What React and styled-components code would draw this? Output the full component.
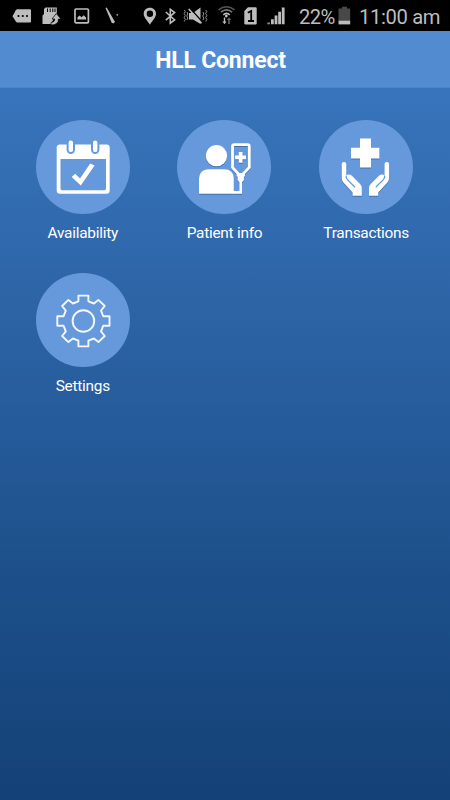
import React from "react";
import styled, { createGlobalStyle } from "styled-components";

const GlobalStyle = createGlobalStyle`
  * {
    box-sizing: border-box;
  }
  body {
    margin: 0;
    background: #144177;
    font-family: Roboto, "Liberation Sans", sans-serif;
  }
`;

const Screen = styled.div`
  width: 450px;
  height: 800px;
  display: flex;
  flex-direction: column;
  overflow: hidden;
  background: linear-gradient(to bottom, #3a78c2 0%, #3874bb 11%, #275d9d 50%, #1c4f89 73%, #144177 100%);
`;

const StatusBar = styled.div`
  display: flex;
  align-items: center;
  flex-shrink: 0;
  height: 31px;
  padding-left: 12px;
  background: #000;
  color: #bdbdbd;
`;

const StatusIcon = styled.svg`
  flex-shrink: 0;
  width: ${(props) => props.$w}px;
  height: 31px;
  margin-right: ${(props) => props.$gap}px;
  fill: #bdbdbd;
`;

const StatusText = styled.span`
  width: ${(props) => props.$w}px;
  margin-right: ${(props) => props.$gap || 0}px;
  padding-top: 3px;
  font-size: 20.2px;
  line-height: 28px;
  letter-spacing: ${(props) => props.$spacing || 0}px;
  white-space: nowrap;
`;

const Header = styled.header`
  display: flex;
  align-items: center;
  justify-content: center;
  flex-shrink: 0;
  height: 57px;
  padding: 4px 9px 0 0;
  background: #528bd0;
  border-bottom: 1px solid #4a84c9;
`;

const Title = styled.h1`
  margin: 0;
  color: #fff;
  font-size: 23px;
  font-weight: 700;
  line-height: 30px;
  letter-spacing: -0.2px;
`;

const Menu = styled.main`
  display: grid;
  grid-template-columns: repeat(3, 1fr);
  grid-auto-rows: 153px;
  padding: 32px 13px 0 12px;
`;

const MenuItem = styled.div`
  display: flex;
  flex-direction: column;
  align-items: center;
`;

const Circle = styled.div`
  width: 94px;
  height: 94px;
  border-radius: 50%;
  background: #6699dc;
  svg {
    display: block;
    filter: ${(props) =>
      props.$shadow ? "drop-shadow(0 1px 0.7px rgba(30, 60, 110, 0.45))" : "none"};
  }
`;

const Label = styled.span`
  margin-top: 9px;
  color: #fff;
  font-size: 15.4px;
  line-height: 20px;
  letter-spacing: -0.25px;
  white-space: nowrap;
`;

function CalendarIcon() {
  return (
    <svg width="94" height="94" viewBox="0 0 94 94" fill="#fff">
      <path
        fillRule="evenodd"
        d="M24 24.5H70.5Q73.7 24.5 73.7 27.7V70.5Q73.7 73.7 70.5 73.7H24Q20.7 73.7 20.7 70.5V27.7Q20.7 24.5 24 24.5ZM24.5 39V68.5Q24.5 70.2 26.2 70.2H68.3Q70 70.2 70 68.5V39Z"
      />
      <g strokeLinecap="round">
        <path d="M34.8 23V29.8M59.2 23V29.8" stroke="#6699dc" strokeWidth="8.4" />
        <path d="M34.8 22.6V29.9M59.2 22.6V29.9" stroke="#fff" strokeWidth="4.4" />
      </g>
      <path d="M35.7 57L39.2 53.7L44 58.4L54.2 43.6L58.6 45.6L44.8 65.4Z" />
    </svg>
  );
}

function PatientIcon() {
  return (
    <svg width="94" height="94" viewBox="0 0 94 94" fill="#fff">
      <circle cx="39.5" cy="35.7" r="10.6" />
      <path d="M22 73.7V60Q22 49.2 32 49.2H47Q56.8 49.2 56.8 59V73.7Z" />
      <g fill="none" stroke="#fff">
        <path
          d="M57.3 24.7H70.5Q72.3 24.7 72.3 26.5V47.5L66.5 53.5V55H61V53.5L55.5 47.5V26.5Q55.5 24.7 57.3 24.7Z"
          strokeWidth="2.8"
        />
        <path d="M63.7 60V72.4H56" strokeWidth="2.6" />
      </g>
      <path d="M60.6 53H66.9V60L65.3 62H62.2L60.6 60Z" />
      <path d="M61.7 32H65.5V35.5H69V39.2H65.5V42.8H61.7V39.2H58.1V35.5H61.7Z" />
    </svg>
  );
}

function HandsIcon() {
  return (
    <svg width="94" height="94" viewBox="0 0 94 94" fill="#fff">
      <path d="M41 18.6H52V27.7H60.4V38.4H52V47.6H41V38.4H32V27.7H41Z" />
      <g id="hand">
        <path d="M22.7 44.2Q22.7 42 25 42Q27.3 42 27.3 44.2V55.2Q30 53.4 32.6 55.6L41.3 64.2Q42.8 65.8 42.8 68V75.8H33.6V72.4L24.4 62.4Q22.9 60.7 22.8 58.5Z" />
        <path
          d="M27.2 56.2Q26.9 58 28.4 59.6L35.6 66.8"
          fill="none"
          stroke="#6699dc"
          strokeWidth="1.3"
          strokeLinecap="round"
        />
      </g>
      <use href="#hand" transform="translate(92.8 0) scale(-1 1)" />
    </svg>
  );
}

function GearIcon() {
  return (
    <svg
      width="94"
      height="94"
      viewBox="0 0 94 94"
      fill="none"
      stroke="#f4f8fd"
      strokeWidth="1.9"
      strokeLinejoin="round"
    >
      <g transform="translate(47.4 48)">
        <circle r="10.8" />
        <path d="M-5 -25.4H5V-19.7L10.5 -17.5L15 -21.1L21.3 -15L17.6 -10.3L19.8 -4.8H26.1V4.8H19.8L17.6 10.3L21.3 15L15 21.1L10.5 17.5L5 19.7V25.4H-5V19.7L-10.5 17.5L-15 21.1L-21.3 15L-17.6 10.3L-19.8 4.8H-26.1V-4.8H-19.8L-17.6 -10.3L-21.3 -15L-15 -21.1L-10.5 -17.5L-5 -19.7Z" />
      </g>
    </svg>
  );
}

const items = [
  { name: "Availability", icon: CalendarIcon },
  { name: "Patient info", icon: PatientIcon, shadow: true },
  { name: "Transactions", icon: HandsIcon, shadow: true },
  { name: "Settings", icon: GearIcon },
];

function PhoneStatus() {
  return (
    <StatusBar>
      {/* messages */}
      <StatusIcon $w={19} $gap={11} viewBox="0 0 19 31">
        <path d="M5.5 9.3H18Q19 9.3 19 10.3V21.5Q19 22.5 18 22.5H5.5Q4.5 22.5 3.8 21.5L0.5 16.2L3.8 10.3Q4.5 9.3 5.5 9.3Z" />
        <g fill="#000">
          <circle cx="6.5" cy="16" r="1.1" />
          <circle cx="10.8" cy="16" r="1.1" />
          <circle cx="15" cy="16" r="1.1" />
        </g>
      </StatusIcon>
      {/* sd card */}
      <StatusIcon $w={20} $gap={12} viewBox="0 0 20 31">
        <path d="M3.5 7.5H14.8V14L12 18L9 24H0.5V15.5L2 14V9Z" />
        <path d="M5.5 8.5V12M8.2 8.5V12M10.8 8.5V12M13 8.5V12" stroke="#000" strokeWidth="1" />
        <path
          d="M9 25V22.5Q12.5 22.5 12.8 19H10L14.3 13.5L19 19H16.5Q16.5 25 9 25Z"
          stroke="#000"
          strokeWidth="0.7"
        />
      </StatusIcon>
      {/* picture */}
      <StatusIcon $w={16} $gap={15} viewBox="0 0 16 31">
        <rect x="1" y="9" width="13.4" height="13.8" rx="1" fill="none" stroke="#bdbdbd" strokeWidth="1.7" />
        <path d="M3.4 19.5V17.5L5.5 15.5L7.6 17.2L9.7 15.2L12 17.5V19.5Z" />
      </StatusIcon>
      {/* wand */}
      <StatusIcon $w={14} $gap={24} viewBox="0 0 14 31">
        <path d="M0.5 8L1.7 7.6L10 22L8.2 23.5L6.5 22.3Z" />
        <circle cx="12.3" cy="14.9" r="0.8" />
      </StatusIcon>
      {/* location */}
      <StatusIcon $w={14} $gap={8} viewBox="0 0 14 31">
        <path
          fillRule="evenodd"
          d="M6.9 7.8C10.4 7.8 13 10.4 13 13.7C13 17.7 9.2 20.6 6.9 24.8C4.6 20.6 0.7 17.7 0.7 13.7C0.7 10.4 3.4 7.8 6.9 7.8ZM6.9 10.6A3.2 3.2 0 1 0 6.9 17A3.2 3.2 0 1 0 6.9 10.6Z"
        />
      </StatusIcon>
      {/* bluetooth */}
      <StatusIcon $w={12} $gap={6} viewBox="0 0 12 31">
        <path
          d="M0.8 12L9.6 20L5.3 23.2V9.4L9.6 12.5L0.8 20.2"
          fill="none"
          stroke="#bdbdbd"
          strokeWidth="1.6"
        />
      </StatusIcon>
      {/* vibrate */}
      <StatusIcon $w={25} $gap={10} viewBox="0 0 25 31">
        <path d="M6 13H10L17.5 7.5V24L10 19.5H6Z" />
        <path d="M6.8 8L19.4 22" stroke="#000" strokeWidth="1.4" />
        <path d="M5.7 9L18.5 23.2" stroke="#bdbdbd" strokeWidth="1.6" />
        <path
          d="M1.2 10L2.3 11.5L1.2 13.5L2.3 15.5L1.2 17.5L2.3 19.5L1.2 21.5M4 12L4.8 14L3.8 16L4.8 18L4 20M20 12L20.8 14L19.8 16L20.8 18L20 20M22.7 10L23.8 11.5L22.7 13.5L23.8 15.5L22.7 17.5L23.8 19.5L22.7 21.5"
          fill="none"
          stroke="#a0a0a0"
          strokeWidth="0.9"
        />
      </StatusIcon>
      {/* wifi */}
      <StatusIcon $w={17} $gap={9} viewBox="0 0 17 31">
        <g fill="none" strokeWidth="1.6">
          <path d="M0.5 9.9Q8.5 3.6 16.5 9.9" stroke="#555" />
          <path d="M2.8 12.2Q8.5 7.6 14.2 12.2" stroke="#777" />
          <path d="M5.3 14.8Q8.5 12 11.7 14.8" stroke="#bdbdbd" />
        </g>
        <circle cx="8.3" cy="16" r="1.4" />
        <path d="M5.8 17.5H7.2V21.5H8.6L6.5 24.3L4.4 21.5H5.8Z" />
        <path d="M10.2 24V20H8.9L11 17.3L13.1 20H11.8V24Z" fill="#666" />
      </StatusIcon>
      {/* sim 1 */}
      <StatusIcon $w={13} $gap={10} viewBox="0 0 13 31">
        <path d="M4 7.3H11.5Q12.7 7.3 12.7 8.5V23.2Q12.7 24.4 11.5 24.4H1.5Q0.3 24.4 0.3 23.2V11Z" />
        <path d="M3.8 12.7L7.2 11V21M4 21H10" fill="none" stroke="#000" strokeWidth="1.8" />
      </StatusIcon>
      {/* signal */}
      <StatusIcon $w={18} $gap={14} viewBox="0 0 18 31">
        <path d="M0.3 22.5H3V24.3H0.3Z" fill="#888" />
        <path d="M4 19.3H6.8V24.3H4ZM7.6 15.5H10.4V24.3H7.6ZM11.2 11.8H14V24.3H11.2ZM14.8 7.5H17.6V24.3H14.8Z" />
      </StatusIcon>
      <StatusText $w={36} $gap={3} $spacing={-0.6}>
        22%
      </StatusText>
      {/* battery */}
      <StatusIcon $w={13} $gap={8} viewBox="0 0 13 31">
        <path d="M4 6.8H9V8.6H12.2V21H0.5V8.6H4Z" fill="#484848" />
        <path d="M0.5 20.7H12.2V24.4H0.5Z" />
      </StatusIcon>
      <StatusText $w={85} $spacing={-0.35}>
        11:00 am
      </StatusText>
    </StatusBar>
  );
}

function App() {
  return (
    <>
      <GlobalStyle />
      <Screen>
        <PhoneStatus />
        <Header>
          <Title>HLL Connect</Title>
        </Header>
        <Menu>
          {items.map(({ name, icon: Icon, shadow }) => (
            <MenuItem key={name}>
              <Circle $shadow={shadow}>
                <Icon />
              </Circle>
              <Label>{name}</Label>
            </MenuItem>
          ))}
        </Menu>
      </Screen>
    </>
  );
}

export default App;
